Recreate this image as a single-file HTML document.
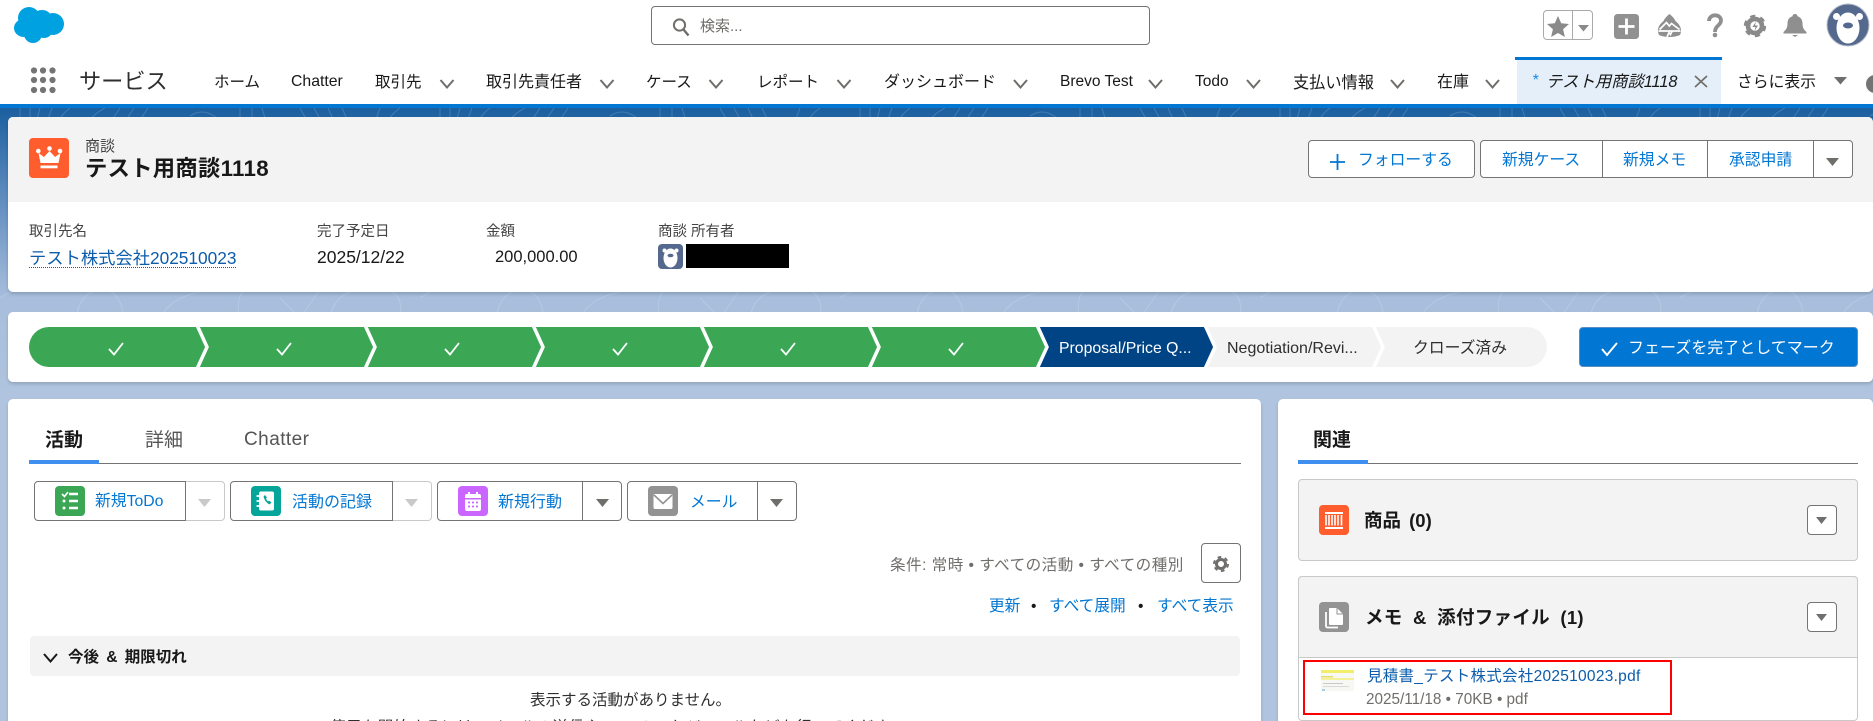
<!DOCTYPE html>
<html lang="ja"><head><meta charset="utf-8"><title>テスト用商談1118</title>
<style>
*{box-sizing:border-box}
html,body{margin:0;padding:0;width:1873px;height:721px;overflow:hidden;background:#fff}
body{position:relative;font-family:"Liberation Sans","Noto Sans CJK JP",sans-serif;color:#181818;font-size:15.5px}
.a{position:absolute}
.t{position:absolute;white-space:nowrap;line-height:24px;height:24px}
.l{color:#0176d3}
.card{position:absolute;background:#fff;border-radius:5px;box-shadow:0 2px 3px rgba(0,0,0,.16)}
.b{position:absolute;background:#fff;border:1px solid #747474}
svg{position:absolute;display:block;overflow:visible}
</style></head><body>

<!-- brand band -->
<div class="a" style="left:0;top:108px;width:1873px;height:613px;background:linear-gradient(180deg,#1b5f9f 0,#5f8cbf 90px,#a7bedc 190px,#b0c4df 290px,#b0c4df 100%)"></div>
<svg style="left:0;top:108px" width="1873" height="300">
<defs><pattern id="p" width="420" height="210" patternUnits="userSpaceOnUse">
<g fill="none" stroke="#fff" stroke-opacity=".16" stroke-width="1">
<path d="M20 0v22M30 0v22M40 0l-6 22M52 0l-8 22M70 0q-14 10-12 24M105 0q-16 8-22 24M120 0l-16 24M134 0l-16 24M148 0l-16 24M190 8q12-8 24 0t14 14M240 0v20M252 0v20M262 0l6 20M300 0l12 22M314 0l12 22M328 0l10 22M342 0l10 22M380 0l-8 22M400 0q-14 10-16 24"/>
<path d="M0 190q30-20 60-6M76 210q4-26 24-28t24 28M160 210q10-20 40-26t30-8M240 210q-8-30 20-34M280 190l20 20M300 210l24-34M330 210q4-28 40-30t30 30"/>
</g></pattern></defs>
<rect width="1873" height="300" fill="url(#p)"/>
</svg>

<!-- top bar -->
<svg style="left:0;top:0" width="80" height="50"><g fill="#00a1e0"><ellipse cx="29" cy="18" rx="11" ry="11"/><ellipse cx="42" cy="19" rx="10" ry="9"/><ellipse cx="53" cy="24" rx="11" ry="11"/><ellipse cx="24" cy="28" rx="10" ry="9"/><ellipse cx="33" cy="34" rx="9" ry="9"/><ellipse cx="44" cy="31" rx="8" ry="7"/></g></svg>

<div class="a" style="left:651px;top:6px;width:499px;height:39px;border:1px solid #747474;border-radius:4px;background:#fff"></div>
<svg style="left:672px;top:17px" width="20" height="20"><circle cx="7.5" cy="8" r="5.6" fill="none" stroke="#706e6b" stroke-width="2"/><path d="M11.5 12.5l5 6" stroke="#706e6b" stroke-width="2.4"/></svg>
<span class="t" style="left:700px;top:15px;color:#706e6b;font-size:15px">検索...</span>

<div class="a" style="left:1543px;top:10px;width:50px;height:30px;border:1px solid #aaa;border-radius:4px"></div>
<div class="a" style="left:1572px;top:10px;width:1px;height:30px;background:#aaa"></div>
<svg style="left:1547px;top:16px" width="22" height="22"><path d="M11 0l3.2 7.2 7.8.8-5.9 5.200 1.800 7.800L11 17l-6.900 4 1.800-7.800L0 8l7.800-.8z" fill="#8a8a8a"/></svg>
<svg style="left:1578px;top:25px" width="12" height="7"><path d="M0 0h11L5.500 6.500z" fill="#8a8a8a"/></svg>
<svg style="left:1614px;top:14px" width="25" height="25"><rect width="25" height="25" rx="3.500" fill="#919191"/><path d="M12.500 4.500v16M4.500 12.500h16" stroke="#fff" stroke-width="2.800"/></svg>
<svg style="left:1658px;top:14px" width="23" height="23"><path d="M11.500 0C14 2 16 4 17.500 7c3 2.500 5.500 5.500 5.500 9.500 0 2-.5 3.500-1 4.500-3 1.300-6.500 2-10.500 2S4 22.300 1 21c-.5-1-1-2.500-1-4.500C0 12.500 2.500 9.500 5.500 7 7 4 9 2 11.500 0z" fill="#8f8f8f"/><path d="M1.500 15.500l7-7 2.800 3.500 2.200-2.500 8 6M.500 17h22M9 23l2-4.500 1.500 2 1.500-3" fill="none" stroke="#fff" stroke-width="1.700"/></svg>
<svg style="left:1707px;top:14px" width="16" height="24"><path d="M2 7C2 -.5 14 -.5 14 6.500c0 5-6 5-6 11.500" fill="none" stroke="#8f8f8f" stroke-width="3.800"/><circle cx="8" cy="21" r="2.300" fill="#8f8f8f"/></svg>
<svg style="left:1744px;top:15px" width="22" height="22"><circle cx="11" cy="11" r="7" fill="none" stroke="#8a8a8a" stroke-width="4.600"/><circle cx="11" cy="11" r="9.800" fill="none" stroke="#8a8a8a" stroke-width="2.800" stroke-dasharray="5.200 5.060"/><path d="M12 6.500L8.500 12h3l-1 4 3.500-5.500h-3z" fill="#8a8a8a"/></svg>
<svg style="left:1783px;top:14px" width="24" height="23"><path d="M12 0c1.500 0 2.500 1 2.500 2.200 3.500 1 5 3.800 5 7.300 0 3.500 1 6 4 8.500v1.500H.500V18c3-2.500 4-5 4-8.500 0-3.500 1.500-6.300 5-7.300C9.500 1 10.500 0 12 0z" fill="#8f8f8f"/><path d="M9 21h6l-3 2z" fill="#8f8f8f"/></svg>
<svg style="left:1827px;top:4px" width="42" height="42"><circle cx="21" cy="21" r="21" fill="#54698d" stroke="#b5bccb" stroke-width="1"/><circle cx="9.500" cy="12.500" r="3.500" fill="#fff"/><circle cx="32.500" cy="12.500" r="3.500" fill="#fff"/><ellipse cx="21" cy="24" rx="11.500" ry="15.500" fill="#fff"/><ellipse cx="21" cy="21.500" rx="5" ry="3" fill="#54698d"/></svg>

<!-- nav -->
<svg style="left:30px;top:66px" width="28" height="28"><g fill="#747474"><circle cx="4" cy="4.500" r="3.100"/><circle cx="13" cy="4.500" r="3.100"/><circle cx="22.500" cy="4.500" r="3.100"/><circle cx="4" cy="14" r="3.100"/><circle cx="13" cy="14" r="3.100"/><circle cx="22.500" cy="14" r="3.100"/><circle cx="4" cy="24" r="3.100"/><circle cx="13" cy="24" r="3.100"/><circle cx="22.500" cy="24" r="3.100"/></g></svg>
<span class="t" style="left:79px;top:70px;font-size:22.200px;color:#2e2e2e">サービス</span>
<span class="t" style="left:214px;top:71px">ホーム</span>
<span class="t" style="left:291px;top:70px;font-size:15.800px">Chatter</span>
<span class="t" style="left:375px;top:71px">取引先</span>
<span class="t" style="left:486px;top:71px;font-size:16px">取引先責任者</span>
<span class="t" style="left:646px;top:71px">ケース</span>
<span class="t" style="left:757px;top:71px">レポート</span>
<span class="t" style="left:884px;top:71px;font-size:16px">ダッシュボード</span>
<span class="t" style="left:1060px;top:70px;font-size:15.500px">Brevo Test</span>
<span class="t" style="left:1195px;top:70px;font-size:15.500px">Todo</span>
<span class="t" style="left:1293px;top:71px;font-size:16.200px">支払い情報</span>
<span class="t" style="left:1437px;top:71px;font-size:16px">在庫</span>
<svg style="left:0;top:0" width="1873" height="100"><g fill="none" stroke="#706e6b" stroke-width="2"><path d="M440.500 80l6.500 7.500 6.500-7.500M600.500 80l6.500 7.500 6.500-7.500M709.500 80l6.500 7.500 6.500-7.500M837.500 80l6.500 7.500 6.500-7.500M1014 80l6.500 7.500 6.500-7.500M1149 80l6.500 7.500 6.500-7.500M1247 80l6.500 7.500 6.500-7.500M1391 80l6.500 7.500 6.500-7.500M1486 80l6.500 7.500 6.500-7.500"/></g></svg>
<div class="a" style="left:1517px;top:60px;width:204px;height:44px;background:#e5eff9"></div>
<div class="a" style="left:1515px;top:57px;width:207px;height:3px;background:#0176d3"></div>
<span class="t" style="left:1532px;top:69px;color:#1589ee;font-size:16px;font-style:italic">*</span>
<span class="t" style="left:1546px;top:70px;font-style:italic;font-size:16.300px">テスト用商談1118</span>
<svg style="left:1694px;top:75px" width="14" height="13"><path d="M1 1l12 11M13 1L1 12" stroke="#706e6b" stroke-width="1.700"/></svg>
<span class="t" style="left:1737px;top:71px;font-size:15.800px">さらに表示</span>
<svg style="left:1834px;top:77px" width="14" height="8"><path d="M0 0h13L6.500 7.500z" fill="#706e6b"/></svg>
<div class="a" style="left:1866px;top:75px;width:18px;height:18px;border-radius:50%;background:#747474"></div>
<div class="a" style="left:0;top:104px;width:1873px;height:4px;background:#0176d3"></div>

<!-- header card -->
<div class="card" style="left:8px;top:117px;width:1865px;height:175px;overflow:hidden"><div style="height:85px;background:#f3f3f3"></div></div>
<svg style="left:29px;top:138px" width="40" height="40"><rect width="40" height="40" rx="4" fill="#ff5d2d"/><g fill="#fff"><circle cx="9.300" cy="13" r="2.300"/><circle cx="20.500" cy="10.500" r="2.300"/><circle cx="31" cy="13" r="2.300"/><path d="M9.500 15l5.500 4 5.500-6 5.500 6 5.500-4-2 10H11.500z"/><rect x="11.500" y="27.500" width="17" height="2.800"/></g></svg>
<span class="t" style="left:85px;top:135px;color:#444;font-size:15px">商談</span>
<span class="t" style="left:85px;top:157px;font-size:22.300px;font-weight:700;letter-spacing:.3px">テスト用商談1118</span>

<div class="b" style="left:1308px;top:140px;width:167px;height:38px;border-radius:4px"></div>
<svg style="left:1330px;top:154px" width="16" height="16"><path d="M7.500 0v16M0 8h15" stroke="#0176d3" stroke-width="1.800"/></svg>
<span class="t l" style="left:1358px;top:149px;font-size:15.800px">フォローする</span>
<div class="b" style="left:1480px;top:140px;width:373px;height:38px;border-radius:4px"></div>
<div class="a" style="left:1602px;top:140px;width:1px;height:38px;background:#747474"></div>
<div class="a" style="left:1707px;top:140px;width:1px;height:38px;background:#747474"></div>
<div class="a" style="left:1813px;top:140px;width:1px;height:38px;background:#747474"></div>
<span class="t l" style="left:1502px;top:149px;font-size:15.800px">新規ケース</span>
<span class="t l" style="left:1623px;top:149px;font-size:15.800px">新規メモ</span>
<span class="t l" style="left:1729px;top:149px;font-size:15.800px">承認申請</span>
<svg style="left:1826px;top:158px" width="14" height="9"><path d="M0 0h13L6.500 8z" fill="#706e6b"/></svg>

<span class="t" style="left:29px;top:220px;font-size:14.500px;color:#444">取引先名</span>
<span class="t l" style="left:29px;top:246px;font-size:17.300px;color:#0b5cab">テスト株式会社202510023</span>
<div class="a" style="left:29px;top:267px;width:207px;border-top:1px dotted #0b5cab"></div>
<span class="t" style="left:317px;top:220px;font-size:14.500px;color:#444">完了予定日</span>
<span class="t" style="left:317px;top:245px;font-size:17.500px">2025/12/22</span>
<span class="t" style="left:486px;top:220px;font-size:14.500px;color:#444">金額</span>
<span class="t" style="left:495px;top:245px;font-size:16.500px">200,000.00</span>
<span class="t" style="left:658px;top:220px;font-size:14.500px;color:#444">商談 所有者</span>
<svg style="left:658px;top:244px" width="25" height="25"><rect width="25" height="25" rx="4" fill="#54698d"/><circle cx="6.500" cy="6.500" r="2" fill="#fff"/><circle cx="18.500" cy="6.500" r="2" fill="#fff"/><ellipse cx="12.500" cy="14" rx="7" ry="9.500" fill="#fff"/><ellipse cx="12.500" cy="11.500" rx="3" ry="1.800" fill="#54698d"/></svg>
<div class="a" style="left:686px;top:244px;width:103px;height:24px;background:#000"></div>

<!-- path card -->
<div class="card" style="left:8px;top:312px;width:1865px;height:70px"></div>
<svg style="left:0;top:327px" width="1600" height="40">
<path d="M49 0H1036l12 20-12 20H49a20 20 0 0 1 0-40z" fill="#3ba755"/>
<path d="M1036 0h168l12 20-12 20H1036l12-20z" fill="#014486"/>
<path d="M1204 0h323a20 20 0 0 1 0 40H1204l12-20z" fill="#f3f3f3"/>
<g fill="none" stroke="#fff" stroke-width="3.500"><path d="M197 -2l10 22-10 22M365 -2l10 22-10 22M533 -2l10 22-10 22M701 -2l10 22-10 22M869 -2l10 22-10 22M1037 -2l10 22-10 22M1205 -2l10 22-10 22M1373 -2l10 22-10 22"/>
<path d="M109 22l5 5.500 9-11.500M277 22l5 5.500 9-11.500M445 22l5 5.500 9-11.500M613 22l5 5.500 9-11.500M781 22l5 5.500 9-11.500M949 22l5 5.500 9-11.500" stroke-width="1.800"/></g>
</svg>
<span class="t" style="left:1059px;top:337px;color:#fff;font-size:15.800px">Proposal/Price Q...</span>
<span class="t" style="left:1227px;top:337px;font-size:16px;color:#2e2e2e">Negotiation/Revi...</span>
<span class="t" style="left:1413px;top:337px;font-size:15.800px;color:#2e2e2e">クローズ済み</span>
<div class="a" style="left:1579px;top:327px;width:279px;height:40px;background:#0176d3;border-radius:4px;border:1px solid #5a8dc0"></div>
<svg style="left:1601px;top:342px" width="17" height="14"><path d="M1 7l5 6L16 1" fill="none" stroke="#fff" stroke-width="1.900"/></svg>
<span class="t" style="left:1628px;top:337px;color:#fff;font-size:16px">フェーズを完了としてマーク</span>

<!-- main card -->
<div class="card" style="left:8px;top:399px;width:1253px;height:340px"></div>
<span class="t" style="left:45px;top:429px;font-size:19px;font-weight:700">活動</span>
<span class="t" style="left:145px;top:429px;font-size:19px;color:#555">詳細</span>
<span class="t" style="left:244px;top:428px;font-size:19px;color:#555;letter-spacing:.45px">Chatter</span>
<div class="a" style="left:29px;top:463px;width:1212px;height:1px;background:#747474"></div>
<div class="a" style="left:29px;top:460px;width:70px;height:4px;background:#3f8ff0"></div>

<!-- action buttons -->
<div class="b" style="left:185px;top:481px;width:40px;height:40px;border:1px solid #c9c9c9;border-left:0;border-radius:0 4px 4px 0"></div>
<div class="b" style="left:34px;top:481px;width:152px;height:40px;border-radius:4px 0 0 4px"></div>
<div class="b" style="left:392px;top:481px;width:40px;height:40px;border:1px solid #c9c9c9;border-left:0;border-radius:0 4px 4px 0"></div>
<div class="b" style="left:230px;top:481px;width:163px;height:40px;border-radius:4px 0 0 4px"></div>
<div class="b" style="left:437px;top:481px;width:185px;height:40px;border-radius:4px"></div>
<div class="a" style="left:582px;top:481px;width:1px;height:40px;background:#747474"></div>
<div class="b" style="left:627px;top:481px;width:170px;height:40px;border-radius:4px"></div>
<div class="a" style="left:757px;top:481px;width:1px;height:40px;background:#747474"></div>
<svg style="left:55px;top:486px" width="30" height="30"><rect width="30" height="30" rx="4" fill="#3ba755"/><path d="M7 8l2.500 2.500L13 6" fill="none" stroke="#fff" stroke-width="1.600"/><path d="M14 8h9M14 15h9M14 22h9" stroke="#fff" stroke-width="2.400"/><circle cx="9" cy="15" r="1.500" fill="#fff"/><circle cx="9" cy="22" r="1.500" fill="#fff"/></svg>
<span class="t l" style="left:95px;top:490px;font-size:15.800px">新規ToDo</span>
<svg style="left:198px;top:499px" width="14" height="9"><path d="M0 0h13L6.500 8z" fill="#c9c9c9"/></svg>
<svg style="left:251px;top:486px" width="30" height="30"><rect width="30" height="30" rx="4" fill="#06a59a"/><rect x="8" y="5.500" width="15" height="19" rx="2" fill="#fff"/><path d="M5.500 10h4M5.500 15h4M5.500 20h4" stroke="#fff" stroke-width="1.800"/><path d="M12.500 10.500c1 3.500 2.500 6 6 8l2-2-2.500-2-1 1c-1-1-1.500-2-2-3l1-1-2-2.500z" fill="#06a59a"/></svg>
<span class="t l" style="left:292px;top:491px;font-size:16px">活動の記録</span>
<svg style="left:405px;top:499px" width="14" height="9"><path d="M0 0h13L6.500 8z" fill="#c9c9c9"/></svg>
<svg style="left:458px;top:486px" width="30" height="30"><rect width="30" height="30" rx="4" fill="#cb65ff"/><path d="M7 10a2 2 0 0 1 2-2h12a2 2 0 0 1 2 2v2H7zM7 13.500h16V23a2 2 0 0 1-2 2H9a2 2 0 0 1-2-2z" fill="#fff"/><path d="M11 6v3M19 6v3" stroke="#fff" stroke-width="2"/><path d="M10 16.500h2M14 16.500h2M18 16.500h2M10 20.500h2M14 20.500h2M18 20.500h2" stroke="#cb65ff" stroke-width="1.800"/></svg>
<span class="t l" style="left:498px;top:491px;font-size:16px">新規行動</span>
<svg style="left:596px;top:499px" width="14" height="9"><path d="M0 0h13L6.500 8z" fill="#706e6b"/></svg>
<svg style="left:648px;top:486px" width="30" height="30"><rect width="30" height="30" rx="4" fill="#939393"/><rect x="5.500" y="8" width="19" height="15" rx="1.500" fill="#fff"/><path d="M6 9l9 8.500L24 9" fill="none" stroke="#939393" stroke-width="1.600"/></svg>
<span class="t l" style="left:690px;top:491px;font-size:15.800px">メール</span>
<svg style="left:770px;top:499px" width="14" height="9"><path d="M0 0h13L6.500 8z" fill="#706e6b"/></svg>

<span class="t" style="left:890px;top:554px;font-size:15.600px;color:#706e6b;letter-spacing:.45px">条件: 常時 • すべての活動 • すべての種別</span>
<div class="b" style="left:1201px;top:543px;width:40px;height:40px;border-radius:4px"></div>
<svg style="left:1213px;top:556px" width="16" height="16"><circle cx="8" cy="8" r="4.500" fill="none" stroke="#706e6b" stroke-width="3"/><circle cx="8" cy="8" r="7" fill="none" stroke="#706e6b" stroke-width="2" stroke-dasharray="3.700 3.630"/></svg>
<span class="t l" style="left:989px;top:595px;font-size:15.700px">更新</span>
<span class="t" style="left:1031px;top:595px">•</span>
<span class="t l" style="left:1049px;top:595px;font-size:15.700px">すべて展開</span>
<span class="t" style="left:1138px;top:595px">•</span>
<span class="t l" style="left:1157px;top:595px;font-size:15.700px">すべて表示</span>
<div class="a" style="left:30px;top:636px;width:1210px;height:40px;background:#f3f3f3;border-radius:4px"></div>
<svg style="left:43px;top:653px" width="15" height="10"><path d="M1 1l6.500 7.500L14 1" fill="none" stroke="#181818" stroke-width="2"/></svg>
<span class="t" style="left:68px;top:646px;font-size:15.500px;font-weight:700;word-spacing:3px">今後 &amp; 期限切れ</span>
<span class="t" style="left:530px;top:689px;color:#2e2e2e">表示する活動がありません。</span>
<span class="t" style="left:330px;top:716px;color:#2e2e2e;letter-spacing:.4px">使用を開始するには、メールの送信やToDoのスケジュールなどを行ってください。</span>

<!-- right card -->
<div class="card" style="left:1278px;top:399px;width:595px;height:340px"></div>
<span class="t" style="left:1313px;top:429px;font-size:19px;font-weight:700">関連</span>
<div class="a" style="left:1298px;top:463px;width:560px;height:1px;background:#747474"></div>
<div class="a" style="left:1298px;top:460px;width:70px;height:4px;background:#3f8ff0"></div>

<div class="a" style="left:1298px;top:479px;width:560px;height:82px;background:#f3f3f3;border:1px solid #c9c9c9;border-radius:4px"></div>
<svg style="left:1319px;top:505px" width="30" height="30"><rect width="30" height="30" rx="4" fill="#ff5d2d"/><path d="M6 7h18v2H6zM6 22h18v2H6z" fill="#fff"/><path d="M7 10v10.500M10 10v10.500M13 10v10.500M16 10v10.500M19 10v10.500M22.500 10v10.500" stroke="#fff" stroke-width="1.600"/></svg>
<span class="t" style="left:1364px;top:509px;font-size:18.500px;font-weight:700;word-spacing:3px">商品 (0)</span>
<div class="b" style="left:1807px;top:505px;width:30px;height:30px;border-radius:4px"></div>
<svg style="left:1816px;top:517px" width="12" height="8"><path d="M0 0h11L5.500 7z" fill="#706e6b"/></svg>

<div class="a" style="left:1298px;top:576px;width:560px;height:145px;background:#fff;border:1px solid #c9c9c9;border-radius:4px"></div>
<div class="a" style="left:1298px;top:576px;width:560px;height:82px;background:#f3f3f3;border:1px solid #c9c9c9;border-radius:4px 4px 0 0"></div>
<svg style="left:1319px;top:602px" width="30" height="30"><rect width="30" height="30" rx="4" fill="#939393"/><path d="M11 6h7l6 6v10a1 1 0 0 1-1 1H11a1 1 0 0 1-1-1V7a1 1 0 0 1 1-1z" fill="#fff"/><path d="M7 10v14a1.500 1.500 0 0 0 1.500 1.500H19" fill="none" stroke="#fff" stroke-width="1.800"/><path d="M18 6v6h6" fill="none" stroke="#939393" stroke-width="1"/></svg>
<span class="t" style="left:1365px;top:606px;font-size:18.500px;font-weight:700;word-spacing:5px;letter-spacing:.3px">メモ &amp; 添付ファイル (1)</span>
<div class="b" style="left:1807px;top:602px;width:30px;height:30px;border-radius:4px"></div>
<svg style="left:1816px;top:614px" width="12" height="8"><path d="M0 0h11L5.500 7z" fill="#706e6b"/></svg>

<div class="a" style="left:1303px;top:660px;width:369px;height:55px;border:2.500px solid #f00"></div>
<svg style="left:1321px;top:670px" width="33" height="21"><rect width="33" height="21" fill="#f7f7f4"/><rect y="0" width="33" height="3" fill="#f3ee6a"/><rect y="6" width="12" height="1.500" fill="#e4de6a"/><rect y="8" width="33" height="2" fill="#f5f199"/><rect x="2" y="13" width="20" height="1" fill="#c9c9c9"/><rect x="2" y="16" width="26" height="1" fill="#d9d9d9"/><rect x="1" y="19" width="3" height="2" fill="#a8cde6"/></svg>
<span class="t" style="left:1367px;top:665px;color:#0b5cab;font-size:15.500px;letter-spacing:.27px">見積書_テスト株式会社202510023.pdf</span>
<span class="t" style="left:1366px;top:688px;color:#706e6b;font-size:15.300px">2025/11/18 • 70KB • pdf</span>

</body></html>
